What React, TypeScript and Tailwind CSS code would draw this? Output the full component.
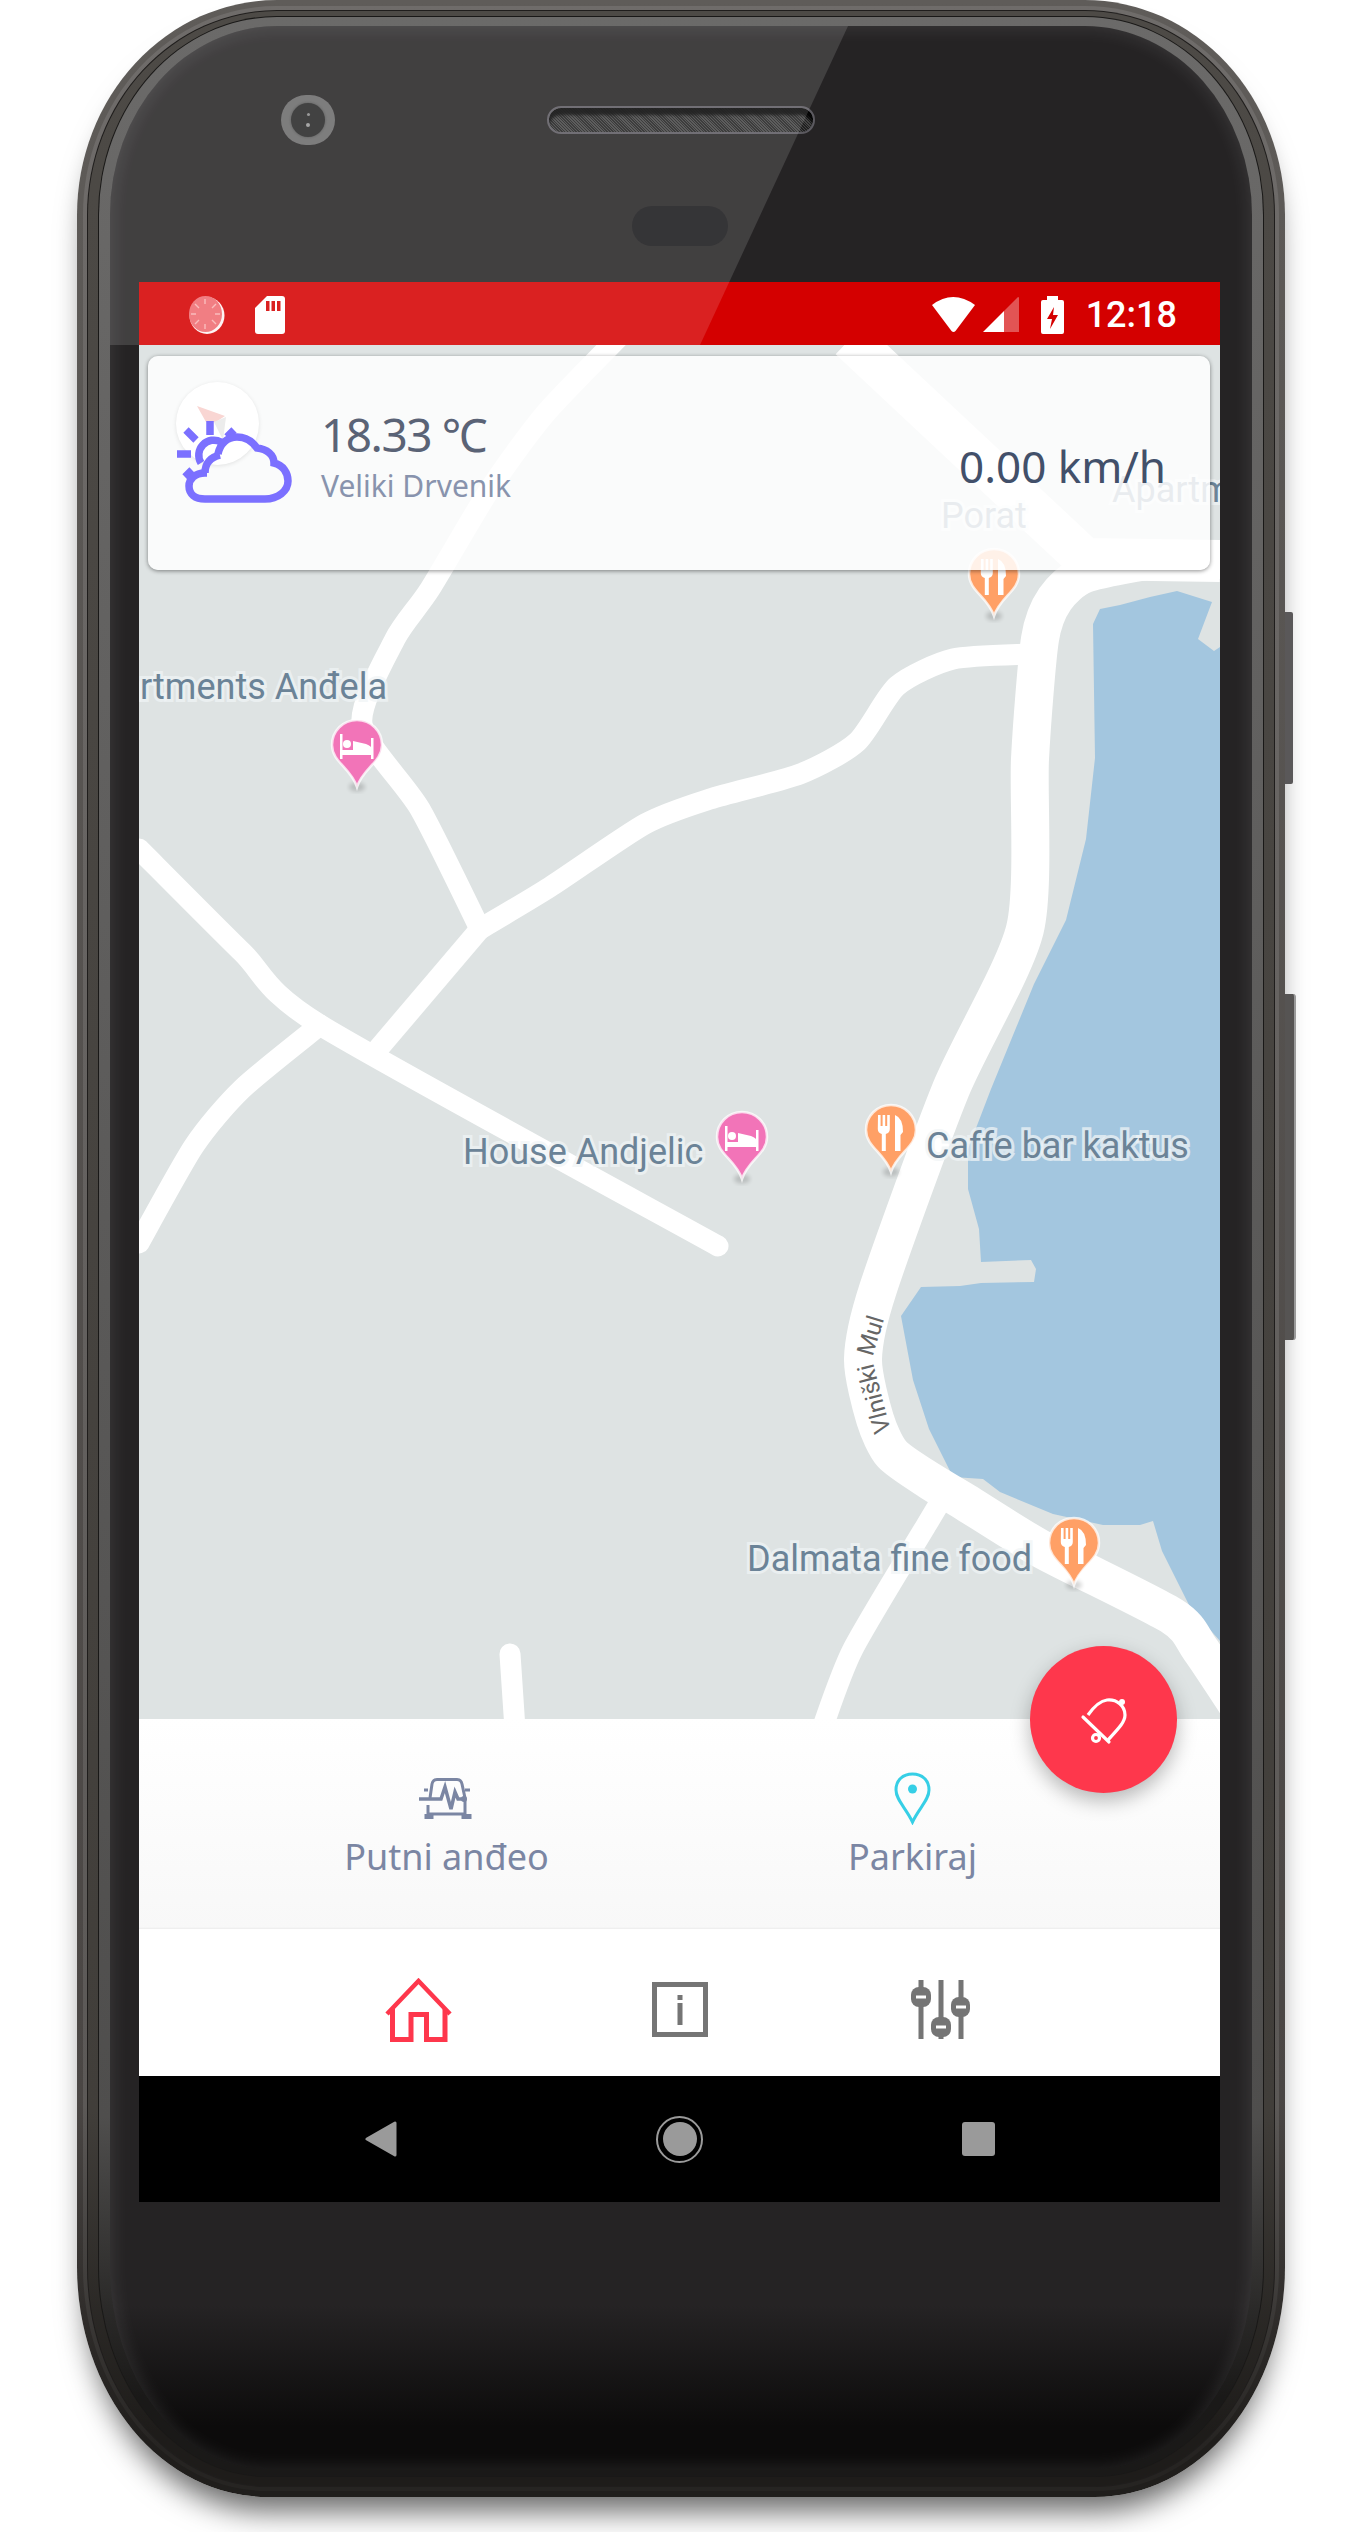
import React from "react";

const Fork = () => (
  <g fill="#fff">
    <path d="M14 12h2.6v11h2V12h2.6v11h2V12h2.6v14q0 4-4 5v17h-4V31q-4-1-4-5z" />
    <path d="M31 48V12q8 3 8 17l-2.5 3V48z" />
  </g>
);
const Bed = () => (
  <g fill="#fff">
    <rect x="10" y="16" width="2.5" height="25" />
    <rect x="41" y="20" width="2.5" height="21" />
    <rect x="10" y="32" width="33" height="5" />
    <circle cx="17" cy="26" r="4" />
    <path d="M23 23l13 3q6 2 6 6H23z" />
  </g>
);
function Pin({ color, bed, className }: { color: string; bed?: boolean; className: string }) {
  return (
    <svg viewBox="0 0 54 76" className={className}>
      <ellipse cx="27" cy="69" rx="8" ry="4.500" fill="#000" opacity=".16" className="blur-[2px]" />
      <path d="M27 2C41 2 52 13 52 27C52 44 33 50 27 69C21 50 2 44 2 27C2 13 13 2 27 2Z" fill={color} stroke="#fff" strokeOpacity=".75" strokeWidth="2.5" />
      {bed ? <Bed /> : <Fork />}
    </svg>
  );
}

function smooth(pts: number[][]) {
  let d = `M${pts[0][0]} ${pts[0][1]}`;
  for (let i = 0; i < pts.length - 1; i++) {
    const p0 = pts[Math.max(i - 1, 0)];
    const p1 = pts[i];
    const p2 = pts[i + 1];
    const p3 = pts[Math.min(i + 2, pts.length - 1)];
    const k = 0.12;
    d += `C${p1[0] + (p2[0] - p0[0]) * k} ${p1[1] + (p2[1] - p0[1]) * k} ${p2[0] - (p3[0] - p1[0]) * k} ${p2[1] - (p3[1] - p1[1]) * k} ${p2[0]} ${p2[1]}`;
  }
  return d;
}

const roadsThin = [
  [[617, 340], [545, 415], [490, 490], [430, 590], [395, 640], [362, 725], [420, 810], [480, 930]],
  [[480, 930], [550, 888], [645, 825], [710, 800], [800, 775], [857, 743], [897, 687], [953, 660], [1030, 655]],
  [[480, 930], [378, 1050]],
  [[139, 850], [242, 953], [320, 1026], [718, 1247]],
  [[320, 1026], [242, 1090], [194, 1147], [139, 1244]],
  [[510, 1655], [515, 1730]],
  [[945, 1495], [927, 1525], [853, 1650], [822, 1730]],
];
const mainRoad = [
  [1240, 562], [1163, 560], [1085, 575], [1055, 600], [1040, 640], [1030, 760], [1025, 930], [951, 1090], [878, 1290], [863, 1360], [875, 1420], [892, 1455],
  [930, 1482], [965, 1503], [1043, 1551], [1172, 1617], [1200, 1650], [1240, 1710],
];

const labelCls =
  "absolute whitespace-nowrap font-['Roboto',sans-serif] text-[36px] leading-none text-[#6b8397] [-webkit-text-stroke:6px_rgba(240,244,246,0.72)] [paint-order:stroke_fill]";

function MapLayer() {
  return (
    <div className="relative h-[1374px] overflow-hidden bg-[#dee3e3]">
      <svg viewBox="139 346 1081 1374" className="absolute inset-0 h-full w-full" fill="none" strokeLinecap="round" strokeLinejoin="round">
        <path
          fill="#a3c6df"
          d="M1093 625L1100 610L1120 606L1150 598L1177 592L1212 603L1198 640L1214 652L1220 648V1642L1190 1608L1162 1552L1153 1522L1140 1526L1103 1526L1053 1515L1000 1493L983 1480L953 1478L929 1430L913 1381L901 1317L921 1288L960 1287L981 1284L1034 1283L1036 1270L1031 1261L981 1263L979 1230L968 1190L968 1150L991 1090L1034 985L1066 921L1086 840L1095 759Z"
        />
        <g stroke="#fff" strokeWidth="21">
          {roadsThin.map((r, i) => (
            <path key={i} d={smooth(r)} />
          ))}
        </g>
        <path d="M850 340L1085 560L1220 562" stroke="#fff" strokeWidth="42" strokeLinecap="butt" />
        <path d={smooth(mainRoad)} stroke="#fff" strokeWidth="38" />
        <path id="mulPath" d="M891 1432L872 1360L890 1300" />
        <text fontFamily="Roboto, sans-serif" fontSize="24" fill="#666">
          <textPath href="#mulPath">Vlniški Mul</textPath>
        </text>
      </svg>

      <div className={`${labelCls} left-[973px] top-[127px]`}>Apartments Anđela</div>
      <div className={`${labelCls} left-[802px] top-[153px]`}>Porat</div>
      <Pin color="#ffa066" className="absolute left-[828px] top-[202px] h-[76px] w-[54px]" />
      <div className={`${labelCls} right-[833px] top-[324px]`}>Apartments Anđela</div>
      <Pin color="#f274b8" bed className="absolute left-[191px] top-[373px] h-[76px] w-[54px]" />
      <div className={`${labelCls} left-[324px] top-[789px]`}>House Andjelic</div>
      <Pin color="#f274b8" bed className="absolute left-[576px] top-[765px] h-[76px] w-[54px]" />
      <Pin color="#ffa066" className="absolute left-[725px] top-[758px] h-[76px] w-[54px]" />
      <div className={`${labelCls} left-[787px] top-[783px]`}>Caffe bar kaktus</div>
      <div className={`${labelCls} left-[608px] top-[1196px]`}>Dalmata fine food</div>
      <Pin color="#ffa066" className="absolute left-[908px] top-[1171px] h-[76px] w-[54px]" />

      <WeatherCard />
    </div>
  );
}

function WeatherCard() {
  return (
    <div className="absolute left-[9px] top-[11px] flex h-[214px] w-[1062px] items-start justify-between rounded-[10px] bg-white/85 pl-[173px] pr-[44px] shadow-[0_1px_4px_rgba(0,0,0,0.45)]">
      <div className="absolute left-[28px] top-[26px] h-[83px] w-[83px] rounded-full bg-white shadow-[0_1px_4px_rgba(0,0,0,0.1)]">
        <svg viewBox="0 0 83 83" className="h-full w-full">
          <path d="M21 24L49 34L40 40H30Z" fill="#f9d6d3" />
          <path d="M38 40L50 35L47 58Z" fill="#ececec" />
        </svg>
      </div>
      <svg viewBox="0 0 115 82" className="absolute left-[29px] top-[65px] h-[82px] w-[115px]" fill="none" stroke="#7b70ff" strokeWidth="7.500">
        <path d="M33 0V14M0 33H14M9 9L19 19M57 9L50 16M8 56L15 49" />
        <path d="M44 21A15 15 0 0 0 24 42" />
        <path d="M28 78H88C101 78 111 70 111 60C111 52 106 44 97 42C97 34 90 28 80 27C75 20 68 16 60 16C50 16 43 23 41 33" />
        <path d="M30 52H28C18 52 12 58 12 65C12 73 18 78 28 78" />
        <path d="M28 52C28 42 34 36 43 34" />
      </svg>
      <div className="mt-[48px] font-['Noto_Sans','Noto_Sans_CJK_SC',sans-serif]">
        <div className="text-[46px] leading-[60px] tracking-[-1.5px] text-[#5a6376]">18.33 ℃</div>
        <div className="mt-[1px] text-[30px] leading-[42px] text-[#8893ad]">Veliki Drvenik</div>
      </div>
      <div className="mt-[80px] font-['Noto_Sans',sans-serif] text-[44px] leading-[60px] text-[#42506a]">0.00 km/h</div>
    </div>
  );
}

function StatusBar() {
  return (
    <div className="flex h-[63px] items-center bg-[#d40000] pl-[50px] pr-[43px] pt-[2px]">
      <svg viewBox="0 0 36 38" className="h-[38px] w-[36px]">
        <ellipse cx="18" cy="19.5" rx="17.5" ry="18.5" fill="#fff" opacity=".95" />
        <ellipse cx="16.5" cy="18" rx="16.5" ry="18" fill="#ef6b70" />
        <g stroke="#f9b3b3" strokeWidth="1.4">
          <path d="M16 3V8M16 28V33M2 18H7M26 18H31M6 8L10 12M23 24L27 28M6 28L10 24M23 12L27 8" />
        </g>
      </svg>
      <svg viewBox="0 0 30 38" className="ml-[30px] h-[38px] w-[30px]">
        <path d="M12 0H27Q30 0 30 3V35Q30 38 27 38H3Q0 38 0 35V12Z" fill="#fff" />
        <path d="M11 5h3.500v10H11zM16.500 5H20v10h-3.500zM22 5h3.500v10H22z" fill="#d40000" />
      </svg>
      <div className="flex-1" />
      <svg viewBox="0 0 45 37" className="h-[37px] w-[45px]">
        <path d="M1 9Q22 -7 44 9L24.500 35Q22.500 37 20.500 35Z" fill="#fff" />
      </svg>
      <svg viewBox="0 0 36 35" className="ml-[7px] h-[35px] w-[36px]">
        <path d="M21 14V35H0Z" fill="#fff" />
        <path d="M21 14L35 0Q36 0 36 1V35H21Z" fill="#fff" opacity=".33" />
      </svg>
      <svg viewBox="0 0 23 38" className="ml-[22px] h-[38px] w-[23px]">
        <path d="M6 0H17V4H21Q23 4 23 6V36Q23 38 21 38H2Q0 38 0 36V6Q0 4 2 4H6Z" fill="#fff" />
        <path d="M13 11L6 23H11L9 33L17 19H12Z" fill="#d40000" />
      </svg>
      <div className="ml-[22px] font-['Roboto',sans-serif] text-[36px] font-medium leading-none text-white">12:18</div>
    </div>
  );
}

function ActionPanel() {
  return (
    <div className="flex h-[210px] justify-center bg-[linear-gradient(to_bottom,#ffffff,#f8f8f8)] pt-[53px] shadow-[inset_0_-2px_2px_-1px_rgba(0,0,0,0.05)]">
      <div className="flex w-[466px] flex-col items-center font-['Noto_Sans',sans-serif] text-[36px] leading-[48px] text-[#7b86a3]">
        <div className="flex h-[53px] items-center">
          <svg viewBox="0 0 55 41" className="h-[41px] w-[55px]" fill="none" stroke="#7b86a3" strokeWidth="3">
            <path d="M11 20L13 6Q14 1.500 18 1.500H38Q42 1.500 43 6L46 20V36H9V27" />
            <path d="M6 36V41H14V36M43 36V41H52V36" fill="#7b86a3" strokeWidth="1" />
            <path d="M9 12H5M46 12H51" />
            <path d="M0 21H22L26 9L32 31L36 14L39 21H44" strokeWidth="3.500" />
            <circle cx="45" cy="21" r="3" fill="#7b86a3" stroke="none" />
          </svg>
        </div>
        <div className="mt-[8px]">Putni anđeo</div>
      </div>
      <div className="flex w-[466px] flex-col items-center font-['Noto_Sans',sans-serif] text-[36px] leading-[48px] text-[#7b86a3]">
        <div className="flex h-[53px] items-center">
          <svg viewBox="0 0 37 53" className="h-[53px] w-[37px]" fill="none" stroke="#36cfe6" strokeWidth="3">
            <path d="M18.500 50C12 36 2 28 2 18C2 8 9 2 18.500 2C28 2 35 8 35 18C35 28 25 36 18.500 50Z" />
            <circle cx="18.500" cy="17" r="4.500" fill="#36cfe6" stroke="none" />
          </svg>
        </div>
        <div className="mt-[8px]">Parkiraj</div>
      </div>
    </div>
  );
}

function TabBar() {
  return (
    <div className="flex h-[147px] items-center justify-center bg-white pt-[14px]">
      <div className="flex w-[261px] justify-center">
        <svg viewBox="0 0 67 64" className="h-[64px] w-[67px]" fill="none" stroke="#fe374c">
          <path d="M2 36L33.500 3L65 36" strokeWidth="4.500" />
          <path d="M7.500 31V61.500H26V36.500H41.500V61.500H60V31" strokeWidth="5" />
        </svg>
      </div>
      <div className="flex w-[261px] justify-center">
        <svg viewBox="0 0 56 55" className="h-[55px] w-[56px]">
          <rect x="2.500" y="2.500" width="51" height="50" fill="none" stroke="#757575" strokeWidth="5" />
          <path d="M25.500 13h5v5h-5zM25.500 21h5v22h-5z" fill="#757575" />
        </svg>
      </div>
      <div className="flex w-[261px] justify-center">
        <svg viewBox="0 0 59 59" className="h-[59px] w-[59px]">
          <path d="M10 0V59M30 0V59M50 0V59" stroke="#757575" strokeWidth="5" />
          <rect x="0" y="7" width="20" height="20" rx="8" fill="#757575" />
          <rect x="20" y="37" width="20" height="20" rx="8" fill="#757575" />
          <rect x="40" y="17" width="19" height="20" rx="8" fill="#757575" />
          <path d="M5 17H15M25 47H35M45 27H55" stroke="#fff" strokeWidth="3" />
        </svg>
      </div>
    </div>
  );
}

function NavBar() {
  return (
    <div className="flex h-[126px] items-center justify-center bg-black">
      <div className="flex w-[299px] justify-center">
        <svg viewBox="0 0 32 36" className="h-[36px] w-[32px]">
          <path d="M30 2V34L2 18Z" fill="#9a9a9a" stroke="#9a9a9a" strokeWidth="3" strokeLinejoin="round" />
        </svg>
      </div>
      <div className="flex w-[299px] justify-center">
        <div className="flex h-[47px] w-[47px] items-center justify-center rounded-full border-[2px] border-[#9a9a9a]">
          <div className="h-[34px] w-[34px] rounded-full bg-[#9a9a9a]" />
        </div>
      </div>
      <div className="flex w-[299px] justify-center">
        <div className="h-[34px] w-[33px] rounded-[3px] bg-[#9a9a9a]" />
      </div>
    </div>
  );
}

function Screen() {
  return (
    <div className="relative flex flex-col">
      <StatusBar />
      <MapLayer />
      <ActionPanel />
      <TabBar />
      <NavBar />
      <div className="absolute left-[891px] top-[1364px] flex h-[147px] w-[147px] items-center justify-center rounded-full bg-[#fe374c] shadow-[0_8px_20px_rgba(0,0,0,0.28)]">
        <svg viewBox="33 30 60 60" className="h-[60px] w-[60px]" fill="none" stroke="#fff" strokeWidth="3.200">
          <path d="M42 57L68 82" strokeLinecap="round" />
          <path d="M47 55C52 48 58 41 66 40C76 39 84 46 84 55C84 62 78 68 66 81" />
          <circle cx="81" cy="42" r="3" fill="#fff" stroke="none" />
          <circle cx="55" cy="78" r="3.500" />
        </svg>
      </div>
    </div>
  );
}

export default function App() {
  return (
    <div className="h-[2532px] w-[1370px] overflow-hidden bg-white">
      <div className="relative ml-[77px] h-[2497px] w-[1208px]">
        <div className="absolute left-[1208px] top-[612px] h-[172px] w-[8px] rounded-r-[2px] bg-[#5a5859]" />
        <div className="absolute left-[1208px] top-[994px] h-[346px] w-[11px] rounded-r-[3px] border-r-[2px] border-[#9a9a9a] bg-[#565453]" />
        <div className="h-full rounded-t-[200px_215px] rounded-b-[190px_230px] bg-[linear-gradient(to_bottom,#5f5c59_0,#4a4644_2100px,#201e1c_2440px)] p-[6px] shadow-[0_24px_30px_-10px_rgba(0,0,0,0.6)]">
          <div className="h-full rounded-t-[194px_209px] rounded-b-[184px_224px] bg-[linear-gradient(to_bottom,#6f6c6a_0,#5c5957_2100px,#262422_2440px)] p-[4px]">
            <div className="h-full rounded-t-[190px_205px] rounded-b-[180px_220px] bg-[#1f1d1c] p-[1px]">
              <div className="h-full rounded-t-[189px_204px] rounded-b-[179px_219px] bg-[linear-gradient(to_bottom,#4d4a46_0,#413e3a_2100px,#1e1c1a_2420px)] px-[10px] pb-[9px] pt-[5px]">
                <div className="h-full rounded-t-[179px_199px] rounded-b-[169px_210px] bg-[#191817] p-[1px]">
                  <div className="h-full rounded-t-[178px_198px] rounded-b-[168px_209px] bg-[linear-gradient(to_bottom,#6b6a69_0,#4f4e4d_2100px,#1a1918_2380px)] px-[11px] pb-[7px] pt-[9px]">
                    <div className="relative h-full overflow-hidden rounded-t-[167px_189px] rounded-b-[157px_202px] bg-[linear-gradient(to_bottom,#252324_2280px,#0c0b0b_2400px)] pl-[29px] pr-[32px] shadow-[inset_0_0_20px_rgba(255,255,255,0.12)]">
                      <div className="flex h-[256px] flex-col items-center pt-[80px]">
                        <div className="flex h-[28px] w-full items-center pl-[142px]">
                          <div className="flex h-[50px] w-[54px] items-center justify-center rounded-full bg-[#6a6a6a]">
                            <div className="flex h-[34px] w-[34px] flex-col items-center justify-center gap-[7px] rounded-full bg-[#262626] shadow-[0_0_3px_#444]">
                              <div className="h-[3px] w-[3px] rounded-full bg-[#8a8a8a]" />
                              <div className="h-[4px] w-[4px] rounded-full bg-[#999]" />
                            </div>
                          </div>
                          <div className="ml-[212px] h-[28px] w-[268px] rounded-full border-[2px] border-[#5c5a60] bg-[repeating-linear-gradient(45deg,#454545_0,#454545_1px,#202020_1px,#202020_2px)] shadow-[inset_0_7px_3px_rgba(0,0,0,0.9)]" />
                        </div>
                        <div className="mt-[72px] h-[40px] w-[96px] rounded-full bg-[#171719]" />
                      </div>
                      <Screen />
                      <div className="pointer-events-none absolute inset-0 bg-white/[0.13] [clip-path:polygon(0_0,738px_0,590px_319px,0_319px)]" />
                    </div>
                  </div>
                </div>
              </div>
            </div>
          </div>
        </div>
      </div>
    </div>
  );
}
